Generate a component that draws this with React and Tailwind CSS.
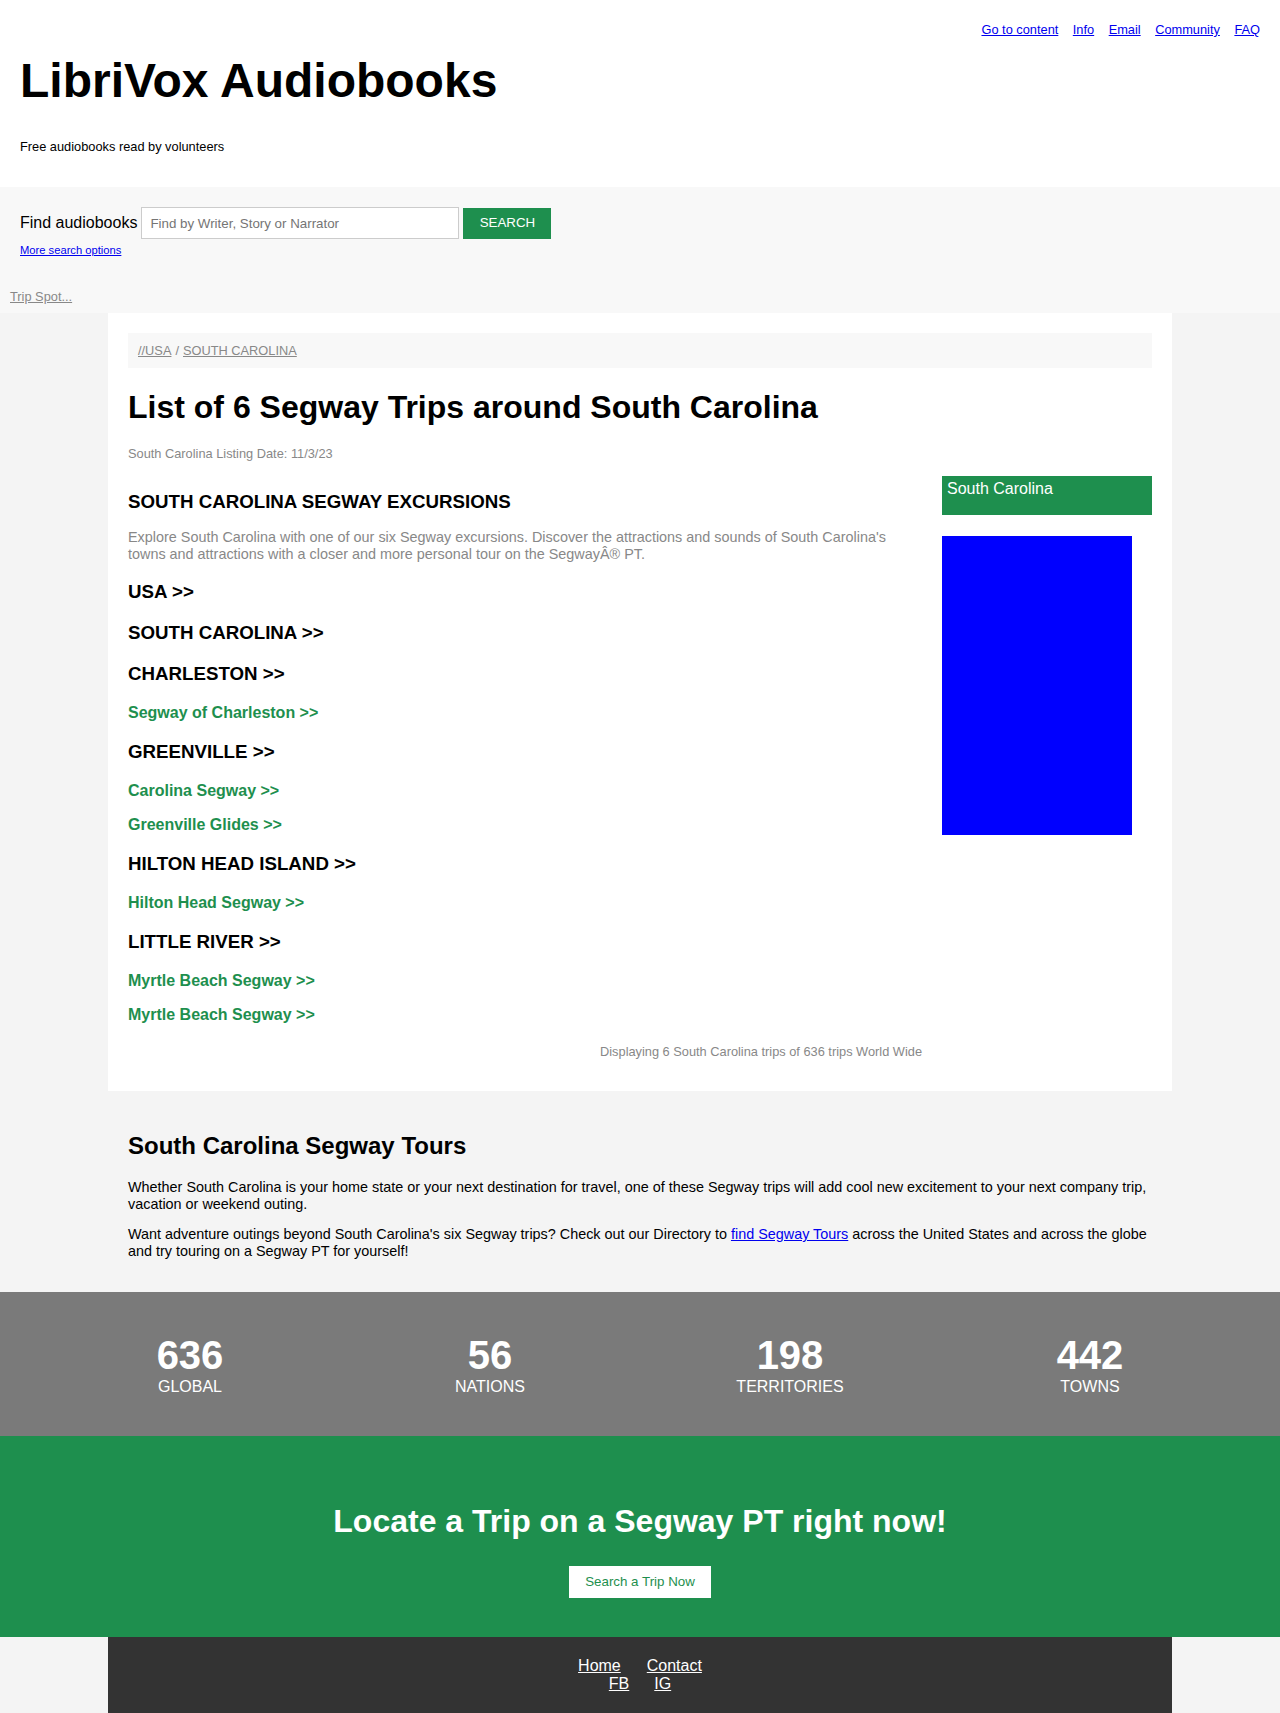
import React from "react";

const GREEN = "text-[#1e8f4e]";

const trips = [
  { type: "h", text: "USA >>" },
  { type: "h", text: "SOUTH CAROLINA >>" },
  { type: "h", text: "CHARLESTON >>" },
  { type: "l", text: "Segway of Charleston >>" },
  { type: "h", text: "GREENVILLE >>" },
  { type: "l", text: "Carolina Segway >>" },
  { type: "l", text: "Greenville Glides >>" },
  { type: "h", text: "HILTON HEAD ISLAND >>" },
  { type: "l", text: "Hilton Head Segway >>" },
  { type: "h", text: "LITTLE RIVER >>" },
  { type: "l", text: "Myrtle Beach Segway >>" },
  { type: "l", text: "Myrtle Beach Segway >>" },
];

const stats = [
  { num: "636", label: "GLOBAL" },
  { num: "56", label: "NATIONS" },
  { num: "198", label: "TERRITORIES" },
  { num: "442", label: "TOWNS" },
];

const navLinks = ["Go to content", "Info", "Email", "Community", "FAQ"];

export default function App() {
  return (
    <div className="min-h-screen bg-[#f4f4f4] font-['Liberation_Sans',Arial,sans-serif] text-black">
      {/* header */}
      <header className="h-[187px] bg-white px-5">
        <nav className="flex justify-end gap-[14.5px] pt-[22px] text-[12.8px] leading-[15px]">
          {navLinks.map((l) => (
            <a key={l} href="#" className="text-[#0000ee] underline">
              {l}
            </a>
          ))}
        </nav>
        <h1 className="mt-4 text-[48px] font-bold leading-[55px]">LibriVox Audiobooks</h1>
        <p className="mt-[31px] text-[12.8px] leading-[15px]">Free audiobooks read by volunteers</p>
      </header>

      {/* search */}
      <div className="h-[126px] bg-[#f8f8f8] pt-5">
        <div className="px-5">
          <form className="flex items-center" onSubmit={(e) => e.preventDefault()}>
            <label className="mr-1 text-base">Find audiobooks</label>
            <input
              type="text"
              placeholder="Find by Writer, Story or Narrator"
              className="h-8 w-[318px] border border-[#cccccc] bg-white px-2 text-[13.33px] outline-none placeholder:text-[#757575]"
            />
            <button
              type="submit"
              className="ml-1 h-[31px] w-[88px] bg-[#1e8f4e] text-[13.33px] text-white"
            >
              SEARCH
            </button>
          </form>
          <a href="#" className="mt-[5px] block text-[11.2px] leading-[13px] text-[#0000ee] underline">
            More search options
          </a>
        </div>
        <a href="#" className="mt-[32px] block pl-[10px] text-[12.8px] leading-[15px] text-[#888888] underline">
          Trip Spot...
        </a>
      </div>

      {/* main card */}
      <main className="mx-auto w-[1064px] bg-white p-5">
        <div className="flex h-[35px] items-center bg-[#f8f8f8] px-[10px] text-[12.8px] text-[#888888]">
          <a href="#" className="underline">//USA</a>
          <span className="mx-1">/</span>
          <a href="#" className="underline">SOUTH CAROLINA</a>
        </div>
        <h1 className="my-[21px] text-[32px] font-bold leading-[37px]">
          List of 6 Segway Trips around South Carolina
        </h1>
        <p className="mb-[15px] text-[12.8px] leading-[14px] text-[#888888]">
          South Carolina Listing Date: 11/3/23
        </p>

        <div className="flex gap-5">
          <div className="w-[794px]">
            <h3 className="mt-[15px] text-[18.72px] font-bold leading-[22px]">
              SOUTH CAROLINA SEGWAY EXCURSIONS
            </h3>
            <p className="mt-4 text-[14.4px] leading-[16.5px] text-[#888888]">
              Explore South Carolina with one of our six Segway excursions. Discover the attractions and sounds of
              South Carolina's towns and attractions with a closer and more personal tour on the SegwayÂ® PT.
            </p>
            {trips.map((t, i) =>
              t.type === "h" ? (
                <h3 key={i} className="my-[19px] text-[18.72px] font-bold leading-[22px]">
                  {t.text}
                </h3>
              ) : (
                <p key={i} className={`my-4 text-base font-bold leading-[18px] ${GREEN}`}>
                  <a href="#">{t.text}</a>
                </p>
              )
            )}
            <p className="mt-[21px] mb-3 text-right text-[12.8px] leading-[14px] text-[#888888]">
              Displaying 6 South Carolina trips of 636 trips World Wide
            </p>
          </div>

          <aside className="w-[210px]">
            <div className="h-[39px] bg-[#1e8f4e] px-[5px] pt-[3px] text-base leading-[20px] text-white">
              South Carolina
            </div>
            <div className="mt-[21px] h-[299px] w-[190px] bg-[#0000ff]" />
          </aside>
        </div>
      </main>

      {/* tours text */}
      <section className="mx-auto w-[1064px] px-5 pt-[41px] pb-[32px]">
        <h2 className="text-2xl font-bold leading-[28px]">South Carolina Segway Tours</h2>
        <p className="mt-[19px] text-[14.4px] leading-[17px]">
          Whether South Carolina is your home state or your next destination for travel, one of these Segway trips will
          add cool new excitement to your next company trip, vacation or weekend outing.
        </p>
        <p className="mt-[13px] text-[14.4px] leading-[17px]">
          Want adventure outings beyond South Carolina's six Segway trips? Check out our Directory to{" "}
          <a href="#" className="text-[#0000ee] underline">
            find Segway Tours
          </a>{" "}
          across the United States and across the globe and try touring on a Segway PT for yourself!
        </p>
      </section>

      {/* stats */}
      <section className="bg-[#7a7a7a] py-10 text-white">
        <div className="mx-auto grid w-[1200px] grid-cols-4 text-center">
          {stats.map((s) => (
            <div key={s.label}>
              <div className="text-[40px] font-bold leading-[46px]">{s.num}</div>
              <div className="text-base leading-[18px]">{s.label}</div>
            </div>
          ))}
        </div>
      </section>

      {/* call to action */}
      <section className="bg-[#1e8f4e] pt-10 pb-[39px] text-center">
        <h2 className="mt-[27px] mb-[26px] text-[32px] font-bold leading-[37px] text-white">
          Locate a Trip on a Segway PT right now!
        </h2>
        <button className="h-8 w-[142px] bg-white text-[13.33px] text-[#1e8f4e]">Search a Trip Now</button>
      </section>

      {/* footer */}
      <footer className="mx-auto w-[1064px] bg-[#333333] pt-5 pb-[21px] text-center text-base leading-[18px] text-white">
        <div className="flex justify-center gap-[26px]">
          <a href="#" className="underline">Home</a>
          <a href="#" className="underline">Contact</a>
        </div>
        <div className="flex justify-center gap-[25px]">
          <a href="#" className="underline">FB</a>
          <a href="#" className="underline">IG</a>
        </div>
      </footer>
    </div>
  );
}
